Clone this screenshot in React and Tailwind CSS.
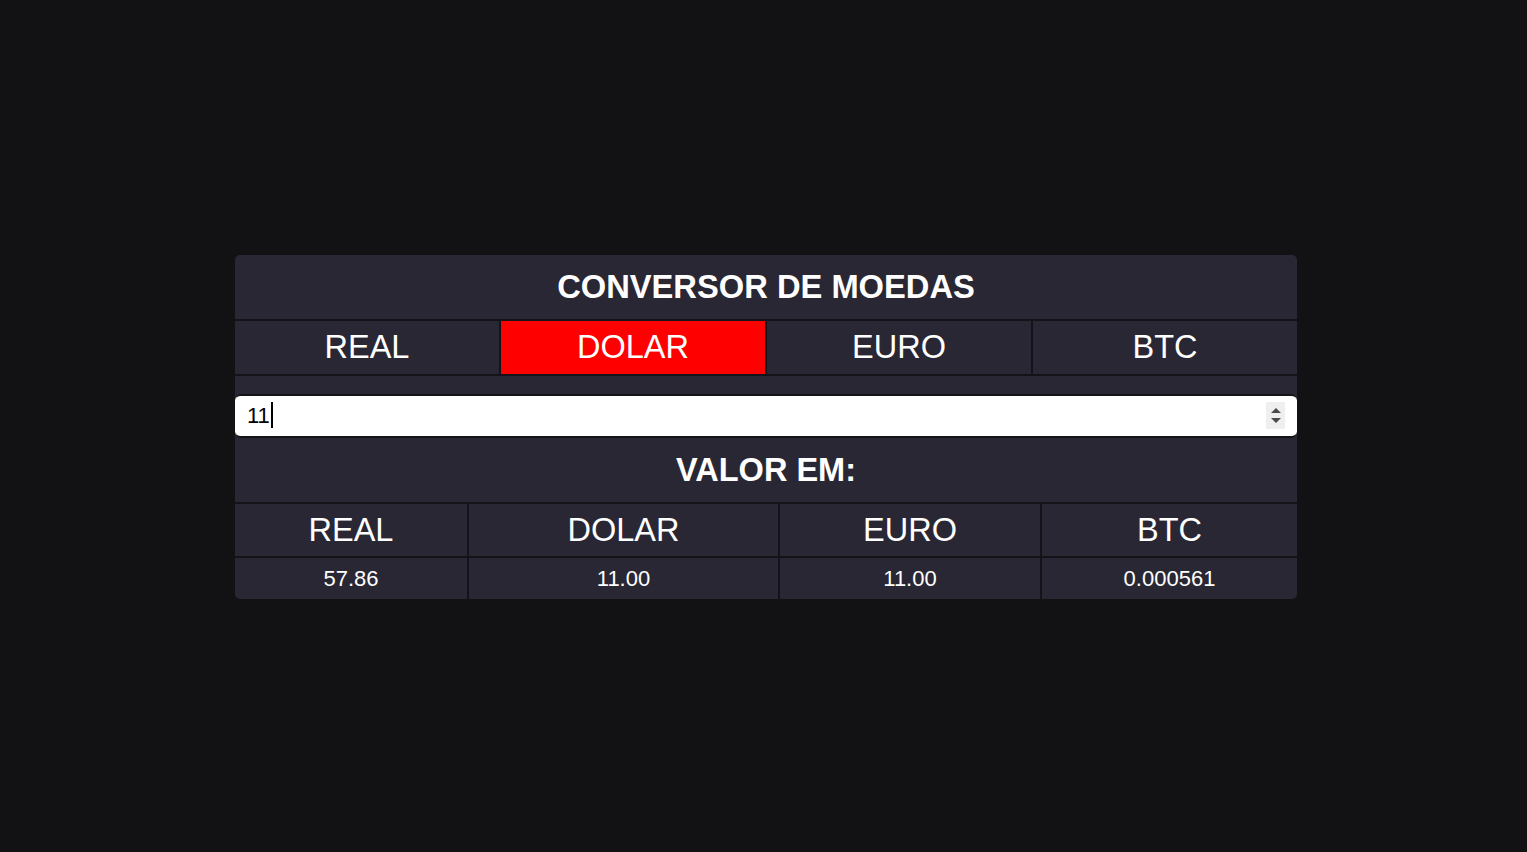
import { useState } from "react";

const moedas = ["REAL", "DOLAR", "EURO", "BTC"];

const taxas = {
  REAL: 1,
  DOLAR: 5.26,
  EURO: 5.26,
  BTC: 103100,
};

const App = () => {
  const [origem, setOrigem] = useState("DOLAR");
  const [valor, setValor] = useState("11");

  const emReal = (parseFloat(valor) || 0) * taxas[origem];
  const resultados = {
    REAL: "57.86",
    DOLAR: "11.00",
    EURO: "11.00",
    BTC: "0.000561",
  };

  return (
    <div className="min-h-screen bg-[#121214] flex items-center justify-center pl-[5px] pt-[2px] font-['Liberation_Sans',Arial,sans-serif] text-white">
      <div className="w-[1062px] rounded-[5px] overflow-hidden bg-[#141318] flex flex-col">
        {/* TITULO */}
        <div className="h-[64px] bg-[#2a2734] flex items-center justify-center">
          <h1 className="text-[32.7px] font-bold leading-none">CONVERSOR DE MOEDAS</h1>
        </div>

        {/* BOTOES */}
        <div className="mt-[2px] grid grid-cols-4 gap-[2px]">
          {moedas.map((m) => (
            <button
              key={m}
              onClick={() => setOrigem(m)}
              className={`h-[53px] text-[32.5px] leading-none flex items-center justify-center ${
                origem === m ? "bg-[#ff0000]" : "bg-[#2a2734]"
              }`}
            >
              {m}
            </button>
          ))}
        </div>

        {/* INPUT */}
        <div className="mt-[2px] bg-[#2a2734] pt-[18px]">
          <div className="relative">
            <input
              autoFocus
              type="text"
              value={valor}
              onChange={(e) => setValor(e.target.value)}
              className="w-full h-[44px] bg-white text-black caret-black text-[22px] pl-[12px] rounded-[6px] border-y-2 border-[#141318] outline-none"
            />
            {/* cursor */}
            <div className="absolute left-[36px] top-[8px] w-[2px] h-[26px] bg-black pointer-events-none" />
            <div className="absolute right-[12px] top-[8px] w-[19px] h-[27px] bg-[#efefef] flex flex-col items-center justify-center gap-[5px]">
              <div className="w-0 h-0 border-l-[5px] border-r-[5px] border-b-[5px] border-l-transparent border-r-transparent border-b-[#4b4b4b]" />
              <div className="w-0 h-0 border-l-[5px] border-r-[5px] border-t-[5px] border-l-transparent border-r-transparent border-t-[#4b4b4b]" />
            </div>
          </div>
          <div className="h-[64px] flex items-center justify-center">
            <h2 className="text-[32.5px] font-bold leading-none">VALOR EM:</h2>
          </div>
        </div>

        {/* TABELA */}
        <div className="mt-[2px] grid grid-cols-[232px_309px_260px_255px] gap-[2px]">
          {moedas.map((m) => (
            <div key={m} className="h-[52px] bg-[#2a2734] flex items-center justify-center text-[32.5px] leading-none">
              {m}
            </div>
          ))}
          {moedas.map((m) => (
            <div key={m + "-v"} className="h-[41px] bg-[#2a2734] flex items-center justify-center text-[22px] leading-none">
              {emReal >= 0 ? resultados[m] : ""}
            </div>
          ))}
        </div>
      </div>
    </div>
  );
};

export default App;
